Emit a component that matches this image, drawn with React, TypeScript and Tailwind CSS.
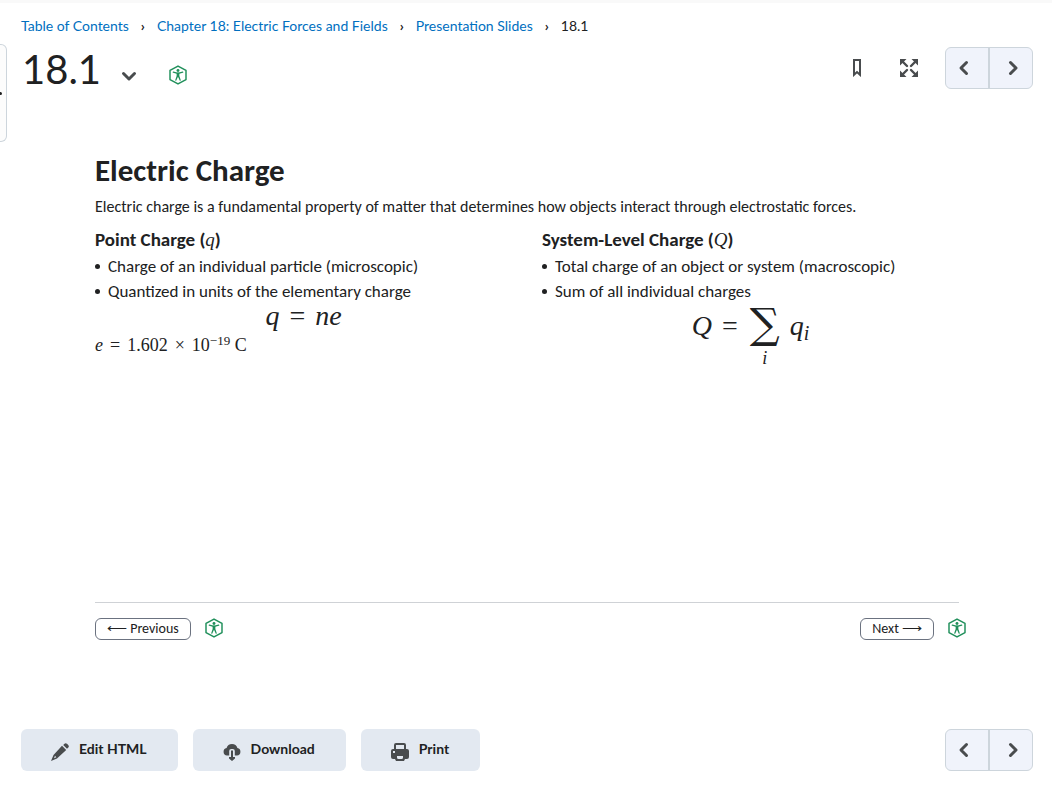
import React from "react";

function Chevron({ className }: { className: string }) {
  return (
    <svg viewBox="0 0 18 18" className={className} fill="none" stroke="#494c4e" strokeWidth="3" strokeLinecap="round" strokeLinejoin="round" aria-hidden="true">
      <path d="M6.5 3.5 L12 9 L6.5 14.5" />
    </svg>
  );
}

function AccessBadge() {
  return (
    <svg viewBox="0 0 20 22" className="h-5 w-5 shrink-0" aria-hidden="true">
      <path d="M10 1.2 L18.8 6 V16 L10 20.8 L1.2 16 V6 Z" fill="none" stroke="#1f8f5a" strokeWidth="1.6" strokeLinejoin="round" />
      <circle cx="10" cy="6" r="1.6" fill="#1f8f5a" />
      <path d="M4.8 7.8 L8.8 8.9 H11.2 L15.2 7.8 M10 9 V12" fill="none" stroke="#1f8f5a" strokeWidth="1.4" strokeLinecap="round" />
      <path d="M8.5 8.6 H11.5 V12 L13.2 17 L12 17.4 L10 13 L8 17.4 L6.8 17 L8.5 12 Z" fill="#1f8f5a" />
    </svg>
  );
}

function Pager() {
  return (
    <div className="flex h-[42px] w-[88px] overflow-hidden rounded-md border border-[#cdd5dc] bg-[#f0f3fb]">
      <button type="button" aria-label="Previous topic" className="flex w-1/2 items-center justify-center border-r border-[#cdd5dc] pr-1.5">
        <Chevron className="h-[18px] w-[18px] rotate-180" />
      </button>
      <button type="button" aria-label="Next topic" className="flex w-1/2 items-center justify-center border-l border-[#cdd5dc] pl-1">
        <Chevron className="h-[18px] w-[18px]" />
      </button>
    </div>
  );
}

function Crumbs() {
  return (
    <nav aria-label="Breadcrumb" className="text-sm leading-5">
      <ol className="flex items-center gap-3">
        <li><a href="#toc" className="text-[#006fbf]">Table of Contents</a></li>
        <li aria-hidden="true" className="font-bold">›</li>
        <li><a href="#chapter" className="text-[#006fbf]">Chapter 18: Electric Forces and Fields</a></li>
        <li aria-hidden="true" className="font-bold">›</li>
        <li><a href="#slides" className="text-[#006fbf]">Presentation Slides</a></li>
        <li aria-hidden="true" className="font-bold">›</li>
        <li aria-current="page">18.1</li>
      </ol>
    </nav>
  );
}

const serif = "font-['Liberation_Serif',serif]";

function Action({ label, children }: { label: string; children: React.ReactNode }) {
  return (
    <button type="button" className="flex h-[42px] items-center gap-2.5 rounded-md bg-[#e3e9f1] pr-[31px] pb-0.5 pl-[30px] text-sm font-bold">
      <span className="pt-1.5">{children}</span>
      {label}
    </button>
  );
}

function Points({ items }: { items: string[] }) {
  return (
    <ul className="text-[17px] leading-[25px]">
      {items.map((item) => (
        <li key={item} className="flex items-center gap-2">
          <span className="h-[5px] w-[5px] rounded-full bg-[#202122]" />
          {item}
        </li>
      ))}
    </ul>
  );
}

export default function App() {
  return (
    <div className="min-h-screen border-t-[3px] border-[#f9f9f9] bg-white font-['Lato',sans-serif] text-[#202122]">
      <button type="button" aria-label="Open side panel" className="absolute top-11 left-0 flex h-[98px] w-[7px] items-center rounded-r-md border border-l-0 border-[#cdd5dc] bg-[#fcfcfc]">
        <span className="h-[3px] w-0.5 rounded-r-full bg-[#202122]" />
      </button>
      <header className="pt-[13px] pr-[19px] pl-[21px]">
        <Crumbs />
        <div className="mt-2 flex h-[50px] items-start justify-between">
          <div className="flex items-start">
            <h1 className="pl-px text-[40px] leading-[50px]">18.1</h1>
            <button type="button" aria-label="Topic actions" className="mt-[23px] ml-[19px]">
              <Chevron className="h-[18px] w-[18px] rotate-90" />
            </button>
            <span className="mt-[21px] ml-[30px]"><AccessBadge /></span>
          </div>
          <div className="flex items-center pt-[3px]">
            <button type="button" aria-label="Bookmark">
              <svg viewBox="0 0 18 18" className="h-[18px] w-[18px]" fill="none" stroke="#494c4e" strokeWidth="2" aria-hidden="true">
                <path d="M6 1 H12 V15.8 L9 13 L6 15.8 Z" />
              </svg>
            </button>
            <button type="button" aria-label="Full screen" className="mr-[27px] ml-[34px]">
              <svg viewBox="0 0 18 18" className="h-[18px] w-[18px]" aria-hidden="true">
                <path d="M0 0 H6.5 L0 6.5 Z M18 0 V6.5 L11.5 0 Z M0 18 V11.5 L6.5 18 Z M18 18 H11.5 L18 11.5 Z" fill="#494c4e" />
                <path d="M2 2 L7 7 M16 2 L11 7 M2 16 L7 11 M16 16 L11 11" stroke="#494c4e" strokeWidth="2.4" strokeLinecap="round" />
              </svg>
            </button>
            <Pager />
          </div>
        </div>
      </header>

      <main className="pt-[57px] pr-[93px] pl-[95px] font-['Carlito','Lato',sans-serif]">
        <article className="flex min-h-[451px] flex-col">
          <h2 className="text-[31px] leading-[38px] font-bold">Electric Charge</h2>
          <p className="mt-[5px] text-[16px] leading-[26px]">
            Electric charge is a fundamental property of matter that determines how objects interact through electrostatic forces.
          </p>
          <div className="mt-1.5 grid grid-cols-2 gap-[30px]">
            <section>
              <h3 className="text-[19px] leading-7 font-bold">
                Point Charge (<i className={`font-normal ${serif}`}>q</i>)
              </h3>
              <Points items={["Charge of an individual particle (microscopic)", "Quantized in units of the elementary charge"]} />
              <p className={`flex items-center justify-center gap-2 text-[28px] leading-6 ${serif}`}>
                <i>q</i>
                <span className="px-0.5">=</span>
                <i>ne</i>
              </p>
              <p className={`mt-[5px] flex items-baseline gap-1.5 text-[18px] leading-6 ${serif}`}>
                <i>e</i>
                <span className="px-px">=</span>
                <span>1.602</span>
                <span className="px-px">×</span>
                <span>10<sup className="text-[13px]">−19</sup> C</span>
              </p>
            </section>
            <section>
              <h3 className="text-[19px] leading-7 font-bold">
                System-Level Charge (<i className={`font-normal ${serif}`}>Q</i>)
              </h3>
              <Points items={["Total charge of an object or system (macroscopic)", "Sum of all individual charges"]} />
              <div className={`flex items-start justify-center gap-2 text-[28px] leading-[44px] ${serif}`}>
                <i>Q</i>
                <span className="px-0.5">=</span>
                <span className="flex flex-col items-center px-0.5">
                  <span className="font-['DejaVu_Serif',serif] text-[42px] leading-[40px]">∑</span>
                  <i className="mt-1.5 text-[18px] leading-4">i</i>
                </span>
                <i>q<sub className="text-[20px]">i</sub></i>
              </div>
            </section>
          </div>
        </article>
        <div className="border-t border-[#cfd2d6]" />
        <nav aria-label="Slides" className="-mr-2 flex items-start justify-between pt-[15px] text-[14px] leading-5">
          <div className="flex items-start gap-[13px]">
            <button type="button" className="rounded-md border border-[#6b7280] px-[11px]">⟵ Previous</button>
            <AccessBadge />
          </div>
          <div className="flex items-start gap-[13px]">
            <button type="button" className="rounded-md border border-[#6b7280] px-[11px]">Next ⟶</button>
            <AccessBadge />
          </div>
        </nav>
      </main>

      <footer className="mt-[89px] flex justify-between pr-[19px] pb-8 pl-[21px]">
        <div className="flex gap-[15px]">
          <Action label="Edit HTML">
            <svg viewBox="0 0 18 18" className="h-[18px] w-[18px]" fill="#494c4e" aria-hidden="true">
              <path fillRule="evenodd" d="M11 2.8 L15.2 7 L6 15.5 L0 18 L2.5 12 Z M4 12.8 L3 15.2 L5.3 14.2 Z" />
              <path d="M12.2 2 L13.5 0.7 Q14.6 -0.3 16 0.8 L17.2 2 Q18.4 3.4 17.3 4.5 L16 5.8 Z" />
            </svg>
          </Action>
          <Action label="Download">
            <svg viewBox="0 0 18 18" className="h-[18px] w-[18px]" fill="#494c4e" aria-hidden="true">
              <path d="M6.2 12.5 H4 A3.8 3.8 0 0 1 3.6 5 A5.6 5.6 0 0 1 14.4 5 A3.8 3.8 0 0 1 14 12.5 H11.8 V8 A2 2 0 0 0 9.8 6 H8.2 A2 2 0 0 0 6.2 8 Z" />
              <path d="M8 7.5 H10 V14 H12 V15.6 L9 18 L6 15.6 V14 H8 Z" />
            </svg>
          </Action>
          <Action label="Print">
            <svg viewBox="0 0 18 18" className="h-[18px] w-[18px]" fill="#494c4e" aria-hidden="true">
              <path d="M4 7 V2 Q4 1 5 1 H13 Q14 1 14 2 V7" fill="none" stroke="#494c4e" strokeWidth="2" />
              <path fillRule="evenodd" d="M2 6 H16 Q18 6 18 8 V14 Q18 16 16 16 H14 L13 18 H5 L4 16 H2 Q0 16 0 14 V8 Q0 6 2 6 Z M2 8 V10 H4 V8 Z M6 13 V14.5 Q6 16 7.5 16 H10.5 Q12 16 12 14.5 V13 Z" />
            </svg>
          </Action>
        </div>
        <Pager />
      </footer>
    </div>
  );
}
